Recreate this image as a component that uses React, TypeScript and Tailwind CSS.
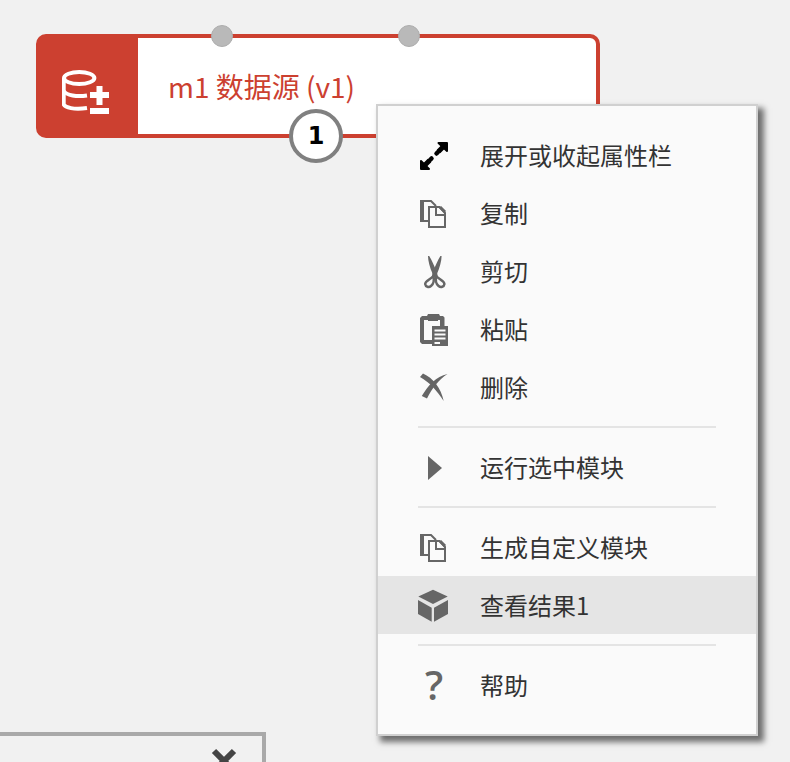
import type { ReactNode } from 'react'

const iconClass = 'w-8 h-8 shrink-0 overflow-visible'

function ExpandIcon() {
  return (
    <svg viewBox="0 0 32 32" className={iconClass} fill="none" stroke="#000" aria-hidden="true">
      <path d="M20.5 4H29v8zM3 22v8h8z" fill="#000" strokeWidth="2" strokeLinejoin="round" />
      <path d="M26 7l-5.500 5.500M6 27l5.500-5.500" strokeWidth="5" />
      <path d="M20 13l-1.500 1.500M12 21l1.500-1.500" strokeWidth="4.500" strokeLinecap="round" />
    </svg>
  )
}

function CopyIcon() {
  return (
    <svg viewBox="0 0 32 32" className={iconClass} fill="none" stroke="#666" strokeWidth="2" aria-hidden="true">
      <path d="M4 3v22" strokeWidth="4" />
      <path d="M5 4h8l5 5M5 24h5" />
      <path d="M11 10h10.500l5.500 6v14H11z" />
      <path d="M18 10v8h9" />
      <path d="M22 10l5 5" strokeWidth="3" />
    </svg>
  )
}

function CutIcon() {
  return (
    <svg viewBox="0 0 32 32" className={iconClass} fill="#666" aria-hidden="true">
      <path d="M10 1h1.200c2.800 4.500 5 10 7.800 16.500l1 5-2.500.5-3-4.500C12 13 10 6 10 1z" />
      <path d="M23.600 1h-1.200c-2.800 4.500-5 10-7.800 16.500l-1 5 2.500.5 3-4.500C21.600 13 23.600 6 23.600 1z" />
      <path d="M15.500 21c.8 4 0 8-2.500 10-2.200 1.700-5.500.8-5.800-1.800-.3-3 4.800-4.500 8.300-8.200z" fill="none" stroke="#666" strokeWidth="2.500" />
      <path d="M18.100 21c-.8 4 0 8 2.500 10 2.200 1.700 5.500.8 5.800-1.800.3-3-4.800-4.500-8.300-8.200z" fill="none" stroke="#666" strokeWidth="2.500" />
    </svg>
  )
}

function PasteIcon() {
  return (
    <svg viewBox="0 0 32 32" className={iconClass} fill="#666" aria-hidden="true">
      <path d="M4 3h5l1-2h11l1 2h3l1.500 1.500V13H22V7h-2v1H10V7H6v20h8v4H4l-2-2V5z" />
      <path d="M14 13h16v20H14z" />
      <path d="M16.500 17.500h11M16.500 21.500h11M16.500 25.500h11M16.500 30h5.500" stroke="#fafafa" strokeWidth="2" />
    </svg>
  )
}

function DeleteIcon() {
  return (
    <svg viewBox="0 0 32 32" className={iconClass} fill="#666" aria-hidden="true">
      <path d="M5 2.500c10 4.500 18 14.500 20.700 27.500C19 20 12 11.500 2 6z" />
      <path d="M29.500 3C21.500 8 14 17 9 27.500l-5.200-2.500C10 14.500 18 5.500 29.500 3z" />
    </svg>
  )
}

function RunIcon() {
  return (
    <svg viewBox="0 0 32 32" className={iconClass} fill="#666" aria-hidden="true">
      <path d="M10 5l14 12-14 12z" />
    </svg>
  )
}

function CubeIcon() {
  return (
    <svg viewBox="0 0 32 32" className={iconClass} fill="#666" aria-hidden="true">
      <path d="M15 .7L29.700 7.500 15 15 .3 7.500z" />
      <path d="M0 11l13.700 7.700v14L0 25z" />
      <path d="M30 11l-14 7.700v14L30 25z" />
    </svg>
  )
}

function HelpIcon() {
  return (
    <span className="w-8 h-8 shrink-0 flex items-center justify-center font-['Open_Sans',sans-serif] font-semibold text-[40px] leading-8 text-[#666]">
      ?
    </span>
  )
}

function DatabaseIcon() {
  return (
    <svg viewBox="0 0 50 60" className="w-[50px] h-[60px]" fill="none" stroke="#fff" strokeWidth="4" aria-hidden="true">
      <ellipse cx="17.200" cy="22" rx="15.200" ry="6" />
      <path d="M1.700 22v26.500c1.500 3 10 5.500 23.300 3.500" />
      <path d="M1.700 35c3 4.500 13 6 23.300 4.500" />
      <path d="M28 39h19M37.500 30v19M28 55h19" strokeWidth="6" />
    </svg>
  )
}

type MenuItem = { label: string; icon: ReactNode; active?: boolean }

const groups: MenuItem[][] = [
  [
    { label: '展开或收起属性栏', icon: <ExpandIcon /> },
    { label: '复制', icon: <CopyIcon /> },
    { label: '剪切', icon: <CutIcon /> },
    { label: '粘贴', icon: <PasteIcon /> },
    { label: '删除', icon: <DeleteIcon /> },
  ],
  [{ label: '运行选中模块', icon: <RunIcon /> }],
  [
    { label: '生成自定义模块', icon: <CopyIcon /> },
    { label: '查看结果1', icon: <CubeIcon />, active: true },
  ],
  [{ label: '帮助', icon: <HelpIcon /> }],
]

function ContextMenu() {
  return (
    <div className="absolute left-[376px] top-[104px] w-[382px] py-5 bg-[#fafafa] border-2 border-[#d0d0d0] shadow-[5px_5px_6px_1px_rgba(0,0,0,0.55)]">
      {groups.map((items, idx) => (
        <div key={idx}>
          {idx > 0 && <hr className="mx-10 my-2.5 border-t-2 border-[#e4e4e4]" />}
          {items.map((item) => (
            <button
              key={item.label}
              type="button"
              className={`w-full h-[58px] pl-10 flex items-center gap-[30px] text-2xl text-[#333] whitespace-nowrap cursor-pointer hover:bg-[#e5e5e5] ${item.active ? 'bg-[#e5e5e5]' : ''}`}
            >
              {item.icon}
              {item.label}
            </button>
          ))}
        </div>
      ))}
    </div>
  )
}

function ModuleNode() {
  return (
    <div className="relative w-[564px] h-[104px] flex bg-white border-4 border-[#cc4030] rounded-[10px]">
      <div className="w-[98px] pl-[22px] flex items-center bg-[#cc4030]">
        <DatabaseIcon />
      </div>
      <div className="flex-1 pl-[30px] flex items-center text-[28px] text-[#cc4030]">m1 数据源 (v1)</div>

      {/* Input ports */}
      <div className="absolute inset-x-0 -top-[13px] pl-[171px] flex gap-[165px]">
        <span className="w-[22px] h-[22px] rounded-full bg-[#b9b9b9] border border-[#adadad]"></span>
        <span className="w-[22px] h-[22px] rounded-full bg-[#b9b9b9] border border-[#adadad]"></span>
      </div>

      {/* Output port */}
      <div className="absolute inset-x-0 -bottom-[29px] pl-[249px] flex">
        <span className="w-[54px] h-[54px] flex items-center justify-center rounded-full bg-white border-4 border-[#808080] font-['DejaVu_Sans',sans-serif] font-bold text-2xl text-black">
          1
        </span>
      </div>
    </div>
  )
}

export default function App() {
  return (
    <main className="relative min-h-screen flex flex-col justify-between overflow-hidden bg-[#f1f1f1] font-['Noto_Sans_CJK_SC',sans-serif]">
      <div className="pl-9 pt-[34px]">
        <ModuleNode />
      </div>

      {/* Docked panel, only its top edge is in view */}
      <section className="w-[266px] h-[30px] flex justify-end items-start pr-6 border-t-4 border-r-4 border-[#a9a9a9] overflow-hidden">
        <button type="button" aria-label="关闭" className="mt-3 shrink-0 cursor-pointer">
          <svg viewBox="0 0 28 28" className="w-7 h-7" fill="none" stroke="#444" strokeWidth="6" aria-hidden="true">
            <path d="M4 3l20 20M24 3L4 23" />
          </svg>
        </button>
      </section>

      <ContextMenu />
    </main>
  )
}
